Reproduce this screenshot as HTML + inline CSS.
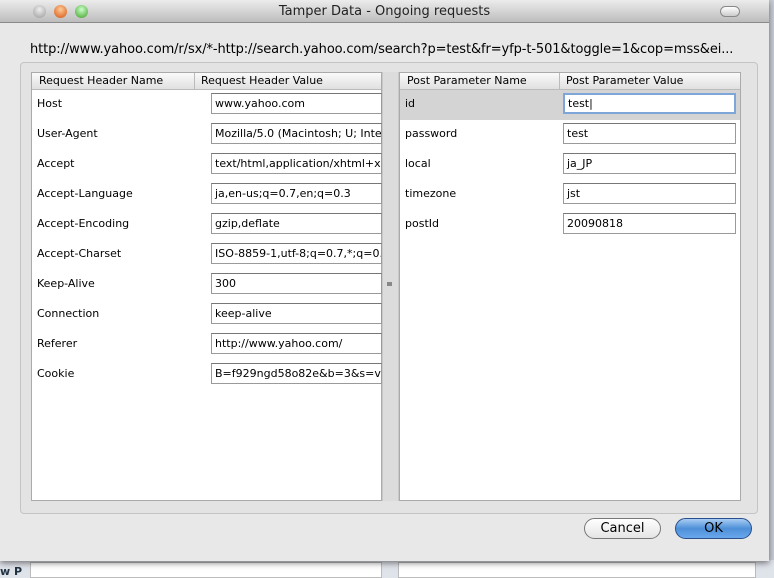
<!DOCTYPE html><html><head><style>
*{margin:0;padding:0;box-sizing:border-box}
body{width:774px;height:578px;overflow:hidden;background:#c8cdd6;font-family:"DejaVu Sans","Liberation Sans",sans-serif;font-size:11px;color:#000;position:relative}
.a{position:absolute}
.win{left:0;top:0;width:769px;height:561px;background:#e8e8e8;box-shadow:0 2px 6px rgba(0,0,0,.5)}
.tb{left:0;top:0;width:769px;height:23px;background:linear-gradient(#ececec,#bdbdbd);border-bottom:1px solid #8a8a8a;text-align:center;font-size:13px;line-height:23px;color:#222}
.dot{width:13px;height:13px;border-radius:50%;top:5px}
.grp{left:20px;top:62px;width:738px;height:452px;border:1px solid #c4c4c4;border-radius:4px;background:#e3e3e3}
.tbl{background:#fff;border:1px solid #aaa}
.hd{height:17px;background:linear-gradient(#fafafa,#e0e0e0);border-bottom:1px solid #bbb;font-size:11px;line-height:16px}
.hd span{position:absolute;top:0}
.lbl{font-size:11px}
.fld{height:21px;background:#fff;border:1px solid #9a9a9a;border-top-color:#777;line-height:19px;padding-left:3px;white-space:nowrap;overflow:hidden;font-size:11px}
.btn{height:21px;border-radius:11px;text-align:center;line-height:19px;font-size:13px}
</style></head><body>
<div class="a" style="left:0;top:560px;width:774px;height:18px;background:#dfe3ea"></div>
<div class="a" style="left:30px;top:562px;width:352px;height:16px;background:#fff;border:1px solid #bbb"></div>
<div class="a" style="left:398px;top:562px;width:358px;height:16px;background:#fff;border:1px solid #bbb"></div>
<div class="a" style="left:0;top:565px;font-size:11px;color:#234;font-weight:bold">w P</div>
<div class="a win">
<div class="a tb">Tamper Data - Ongoing requests</div>
<div class="a dot" style="left:33px;background:radial-gradient(circle at 50% 35%,#eee,#999)"></div>
<div class="a dot" style="left:54px;background:radial-gradient(circle at 50% 35%,#fc9,#d5500e)"></div>
<div class="a dot" style="left:75px;background:radial-gradient(circle at 50% 35%,#cfc,#3a9e20)"></div>
<div class="a" style="left:720px;top:6px;width:20px;height:11px;border-radius:6px;border:1px solid #888;background:linear-gradient(#fff,#ccc)"></div>
<div class="a" style="left:30px;top:42px;font-size:13px;white-space:nowrap;letter-spacing:-0.1px">http://www.yahoo.com/r/sx/*-http://search.yahoo.com/search?p=test&amp;fr=yfp-t-501&amp;toggle=1&amp;cop=mss&amp;ei...</div>
<div class="a grp"></div>
<div class="a tbl" style="left:31px;top:72px;width:351px;height:429px">
<div class="a hd" style="left:0;top:0;width:349px"><span style="left:7px">Request Header Name</span><span style="left:162px;border-left:1px solid #bbb;height:16px;padding-left:6px">Request Header Value</span></div>
</div>
<div class="a" style="left:382px;top:72px;width:17px;height:429px;background:#dcdcdc;border-left:1px solid #c8c8c8;border-right:1px solid #c8c8c8"></div>
<div class="a" style="left:387px;top:282px;width:5px;height:4px;background:#888"></div>
<div class="a tbl" style="left:399px;top:72px;width:342px;height:429px">
<div class="a" style="left:0;top:17px;width:340px;height:30px;background:#d4d4d4"></div>
<div class="a hd" style="left:0;top:0;width:340px"><span style="left:7px">Post Parameter Name</span><span style="left:159px;border-left:1px solid #bbb;height:16px;padding-left:6px">Post Parameter Value</span></div>
</div>
<div class="a lbl" style="left:37px;top:97px">Host</div><div class="a fld" style="left:211px;top:93px;width:171px">www.yahoo.com</div>
<div class="a lbl" style="left:37px;top:127px">User-Agent</div><div class="a fld" style="left:211px;top:123px;width:171px">Mozilla/5.0 (Macintosh; U; Intel Mac</div>
<div class="a lbl" style="left:37px;top:157px">Accept</div><div class="a fld" style="left:211px;top:153px;width:171px">text/html,application/xhtml+xml</div>
<div class="a lbl" style="left:37px;top:187px">Accept-Language</div><div class="a fld" style="left:211px;top:183px;width:171px">ja,en-us;q=0.7,en;q=0.3</div>
<div class="a lbl" style="left:37px;top:217px">Accept-Encoding</div><div class="a fld" style="left:211px;top:213px;width:171px">gzip,deflate</div>
<div class="a lbl" style="left:37px;top:247px">Accept-Charset</div><div class="a fld" style="left:211px;top:243px;width:171px">ISO-8859-1,utf-8;q=0.7,*;q=0.7</div>
<div class="a lbl" style="left:37px;top:277px">Keep-Alive</div><div class="a fld" style="left:211px;top:273px;width:171px">300</div>
<div class="a lbl" style="left:37px;top:307px">Connection</div><div class="a fld" style="left:211px;top:303px;width:171px">keep-alive</div>
<div class="a lbl" style="left:37px;top:337px">Referer</div><div class="a fld" style="left:211px;top:333px;width:171px">http://www.yahoo.com/</div>
<div class="a lbl" style="left:37px;top:367px">Cookie</div><div class="a fld" style="left:211px;top:363px;width:171px">B=f929ngd58o82e&amp;b=3&amp;s=vt;</div>
<div class="a lbl" style="left:405px;top:97px">id</div><div class="a fld" style="left:563px;top:93px;width:173px;border:2px solid #7fa6d8;line-height:17px">test|</div>
<div class="a lbl" style="left:405px;top:127px">password</div><div class="a fld" style="left:563px;top:123px;width:173px">test</div>
<div class="a lbl" style="left:405px;top:157px">local</div><div class="a fld" style="left:563px;top:153px;width:173px">ja_JP</div>
<div class="a lbl" style="left:405px;top:187px">timezone</div><div class="a fld" style="left:563px;top:183px;width:173px">jst</div>
<div class="a lbl" style="left:405px;top:217px">postId</div><div class="a fld" style="left:563px;top:213px;width:173px">20090818</div>
<div class="a btn" style="left:584px;top:518px;width:77px;border:1px solid #777;background:linear-gradient(#fff,#e4e4e4)">Cancel</div>
<div class="a btn" style="left:675px;top:518px;width:77px;border:1px solid #2a4f8c;background:linear-gradient(#a9cdf3,#4d8fd8 50%,#6aa8ec)">OK</div>
</div>
</body></html>
